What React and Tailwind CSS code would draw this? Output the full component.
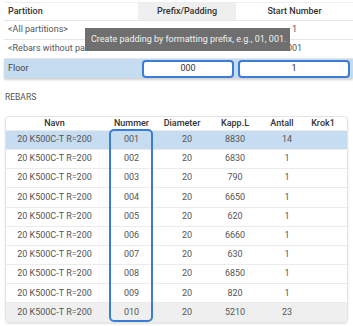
import React from 'react';

const partitions = [
    { name: '<All partitions>', prefix: '', start: '1' },
    { name: '<Rebars without partition>', prefix: '', start: '001' },
];

const rebars = [
    { nr: '001', l: 8830, n: 14 },
    { nr: '002', l: 6830, n: 1 },
    { nr: '003', l: 790, n: 1 },
    { nr: '004', l: 6650, n: 1 },
    { nr: '005', l: 620, n: 1 },
    { nr: '006', l: 6660, n: 1 },
    { nr: '007', l: 630, n: 1 },
    { nr: '008', l: 6850, n: 1 },
    { nr: '009', l: 820, n: 1 },
    { nr: '010', l: 5210, n: 23 },
];

const cols = 'grid grid-cols-[103px_45px_58px_46px_50px_41px]';

const App = () => {
    return (
        <div className="relative w-[353px] h-[326px] overflow-hidden bg-white text-[9px] text-[#555]" style={{ fontFamily: 'Roboto, "Noto Sans", sans-serif' }}>
            {/* Partition table */}
            <div className="pt-[2px] pl-[4px]">
                <div className="grid grid-cols-[134px_98px_117px] h-[18px] items-stretch border-t border-[#eee] text-[#333] font-medium">
                    <div className="flex items-center pl-[4px]">Partition</div>
                    <div className="flex items-center justify-center bg-[#efefef]">Prefix/Padding</div>
                    <div className="flex items-center justify-center">Start Number</div>
                </div>
                {partitions.map((p) => (
                    <div key={p.name} className="grid grid-cols-[134px_98px_117px] h-[19px] border-t border-[#e6e6e6]">
                        <div className="flex items-center pl-[4px] whitespace-nowrap overflow-hidden">{p.name}</div>
                        <div className="flex items-center justify-center">{p.prefix}</div>
                        <div className="flex items-center justify-center">{p.start}</div>
                    </div>
                ))}
                <div className="grid grid-cols-[134px_98px_117px] h-[20px] bg-[#c6dcf1] border-t border-[#e6e6e6] shadow-[0_2px_2px_rgba(0,0,0,0.18)]">
                    <div className="flex items-center pl-[4px] text-[#444]">Floor</div>
                    <div className="flex items-center pl-[4px] pr-[2px] py-[1px]">
                        <div className="flex-1 h-full flex items-center justify-center bg-white border-2 border-[#3a7dd6] rounded-[4px] text-[#333]">000</div>
                    </div>
                    <div className="flex items-center pl-[2px] pr-[3px] py-[1px]">
                        <div className="flex-1 h-full flex items-center justify-center bg-white border-2 border-[#3a7dd6] rounded-[4px] text-[#333]">1</div>
                    </div>
                </div>
            </div>

            {/* Tooltip */}
            <div className="absolute left-[85px] top-[28px] w-[205px] h-[23px] flex items-center pl-[6px] bg-[#6f6f6f] text-[#f2f2f2] text-[9px] whitespace-nowrap">
                Create padding by formatting prefix, e.g., 01, 001.
            </div>

            <div className="pl-[5px] mt-[13px] text-[8.5px] text-[#555]">REBARS</div>

            {/* Rebars table */}
            <div className="relative ml-[5px] mt-[12px] w-[343px] rounded-[4px] border border-[#e4e4e4] shadow-[0_1px_2px_rgba(0,0,0,0.12)] overflow-hidden">
                <div className={`${cols} h-[13px] items-center text-[#333] font-medium`}>
                    <div className="text-center pr-[6px]">Navn</div>
                    <div className="text-center">Nummer</div>
                    <div className="text-center pr-[2px]">Diameter</div>
                    <div className="text-center">Kapp.L</div>
                    <div className="text-center pr-[2px]">Antall</div>
                    <div className="text-center pr-[11px]">Krok1</div>
                </div>
                {rebars.map((r, i) => (
                    <div
                        key={r.nr}
                        className={`${cols} h-[19.2px] items-center border-t border-[#ebebeb] ${i === 0 ? 'bg-[#c6dcf1]' : i === rebars.length - 1 ? 'bg-[#efefef]' : 'bg-white'}`}
                    >
                        <div className="text-center pr-[6px] whitespace-nowrap">20 K500C-T R=200</div>
                        <div className="text-center">{r.nr}</div>
                        <div className="text-center pl-[8px]">20</div>
                        <div className="text-center">{r.l}</div>
                        <div className="text-center pl-[8px]">{r.n}</div>
                        <div></div>
                    </div>
                ))}
                {/* highlighted Nummer column */}
                <div className="absolute left-[103px] top-[12px] w-[44px] bottom-[0px] border-2 border-[#3a7dd6] rounded-[5px]"></div>
            </div>
        </div>
    );
};

export default App;
